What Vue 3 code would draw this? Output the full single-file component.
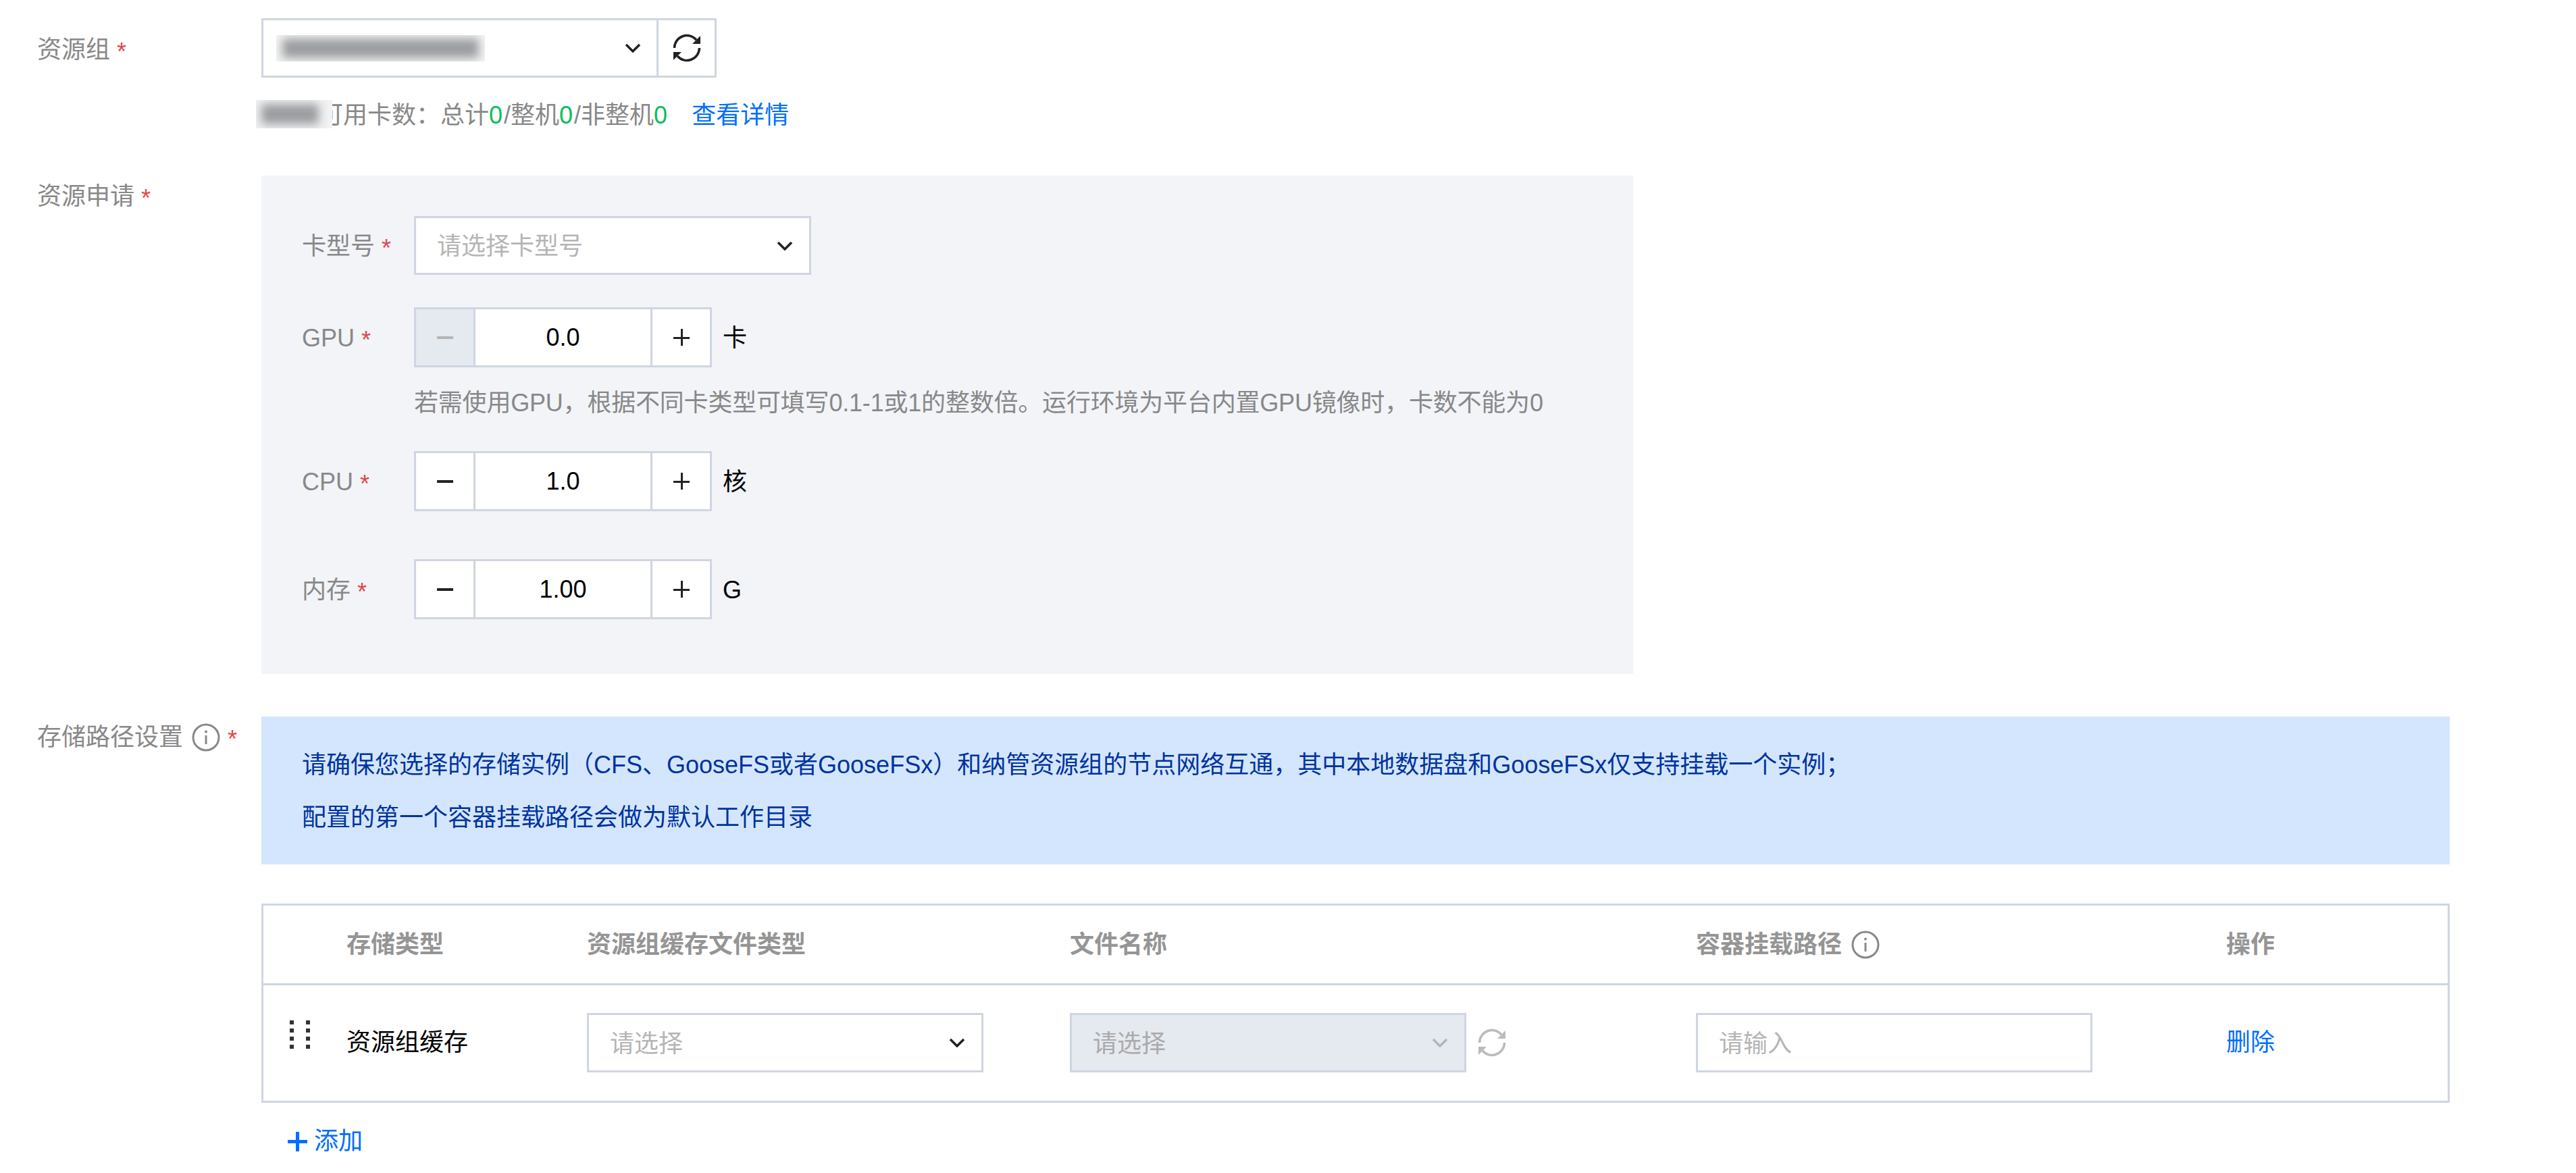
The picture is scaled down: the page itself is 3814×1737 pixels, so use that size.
<script setup>
const steppers = [
  { label: 'GPU', value: '0.0', unit: '卡', disabled: true, help: '若需使用GPU，根据不同卡类型可填写0.1-1或1的整数倍。运行环境为平台内置GPU镜像时，卡数不能为0' },
  { label: 'CPU', value: '1.0', unit: '核' },
  { label: '内存', value: '1.00', unit: 'G' }
]
</script>

<template>
  <main class="page">
    <section class="item first">
      <div class="label first-label">资源组<span class="star">*</span></div>
      <div>
        <div class="group">
          <div class="select group-select">
            <div class="blur-box name-blur"><i></i></div>
            <svg class="chev" viewBox="0 0 24 14"><path d="M2 2l10 10L22 2" /></svg>
          </div>
          <div class="refresh-btn">
            <svg class="refresh" viewBox="0 0 42 42"><path d="M2.500 21A18.500 18.500 0 0 1 35 9" /><path d="M39.500 21A18.500 18.500 0 0 1 7 33" /><path class="fill" d="M41 3V15H29Z" /><path class="fill" d="M1 39V27H13Z" /></svg>
          </div>
        </div>
        <div class="hint">
          <div class="blur-box hint-blur"><i></i></div>
          <span class="hint-text">可用卡数：总计<b>0</b>/整机<b>0</b>/非整机<b>0</b></span>
          <a class="link detail">查看详情</a>
        </div>
      </div>
    </section>

    <section class="item apply">
      <div class="label apply-label">资源申请<span class="star">*</span></div>
      <div class="panel">
        <div class="sub">
          <div class="sub-label">卡型号<span class="star">*</span></div>
          <div class="select card-select">
            <span class="ph">请选择卡型号</span>
            <svg class="chev" viewBox="0 0 24 14"><path d="M2 2l10 10L22 2" /></svg>
          </div>
        </div>
        <template v-for="s in steppers" :key="s.label">
          <div class="sub step-row">
            <div class="sub-label">{{ s.label }}<span class="star">*</span></div>
            <div class="stepper">
              <div class="step-btn minus" :class="{ off: s.disabled }"><i></i></div>
              <div class="step-val">{{ s.value }}</div>
              <div class="step-btn plus"><i></i><i class="v"></i></div>
            </div>
            <span class="unit">{{ s.unit }}</span>
          </div>
          <div v-if="s.help" class="help">{{ s.help }}</div>
          <div v-if="s.label === 'CPU'" class="row-gap"></div>
        </template>
      </div>
    </section>

    <section class="item storage">
      <div class="label storage-label">
        存储路径设置
        <svg class="info" viewBox="0 0 42 42"><circle cx="21" cy="21" r="19" /><path d="M21 18v13" /><circle class="dot" cx="21" cy="12.500" r="2" /></svg>
        <span class="star">*</span>
      </div>
      <div class="storage-body">
        <div class="alert">
          <p>请确保您选择的存储实例（CFS、GooseFS或者GooseFSx）和纳管资源组的节点网络互通，其中本地数据盘和GooseFSx仅支持挂载一个实例；</p>
          <p>配置的第一个容器挂载路径会做为默认工作目录</p>
        </div>
        <div class="table">
          <div class="tr head">
            <div></div>
            <div>存储类型</div>
            <div>资源组缓存文件类型</div>
            <div>文件名称</div>
            <div class="with-info">容器挂载路径
              <svg class="info small" viewBox="0 0 42 42"><circle cx="21" cy="21" r="19" /><path d="M21 18v13" /><circle class="dot" cx="21" cy="12.500" r="2" /></svg>
            </div>
            <div>操作</div>
          </div>
          <div class="tr body">
            <div class="drag"><i v-for="n in 8" :key="n"></i></div>
            <div class="type">资源组缓存</div>
            <div>
              <div class="select cell-select">
                <span class="ph">请选择</span>
                <svg class="chev" viewBox="0 0 24 14"><path d="M2 2l10 10L22 2" /></svg>
              </div>
            </div>
            <div class="file-cell">
              <div class="select cell-select disabled">
                <span class="ph dim">请选择</span>
                <svg class="chev" viewBox="0 0 24 14"><path d="M2 2l10 10L22 2" /></svg>
              </div>
              <svg class="refresh muted" viewBox="0 0 42 42"><path d="M2.500 21A18.500 18.500 0 0 1 35 9" /><path d="M39.500 21A18.500 18.500 0 0 1 7 33" /><path class="fill" d="M41 3V15H29Z" /><path class="fill" d="M1 39V27H13Z" /></svg>
            </div>
            <div>
              <div class="select cell-select"><span class="ph">请输入</span></div>
            </div>
            <div><a class="link">删除</a></div>
          </div>
        </div>
        <a class="add link"><span class="add-plus"><i></i><i class="v"></i></span>添加</a>
      </div>
    </section>
  </main>
</template>

<style scoped>
.page {
  box-sizing: border-box;
  min-height: 1737px;
  padding: 27px 0 0 55px;
  background: #fff;
  color: #000;
  font-family: "Liberation Sans", "Noto Sans CJK SC", sans-serif;
  font-size: 36px;
  line-height: 40px;
}
.item { display: grid; grid-template-columns: 332px 1fr; }
.apply { margin-top: 70px; }
.storage { margin-top: 63px; }
.label { display: flex; align-items: center; color: #888; height: 40px; }
.first-label { margin-top: 27px; }
.apply-label { margin-top: 11px; }
.storage-label { margin-top: 11px; }
.star { color: #e54545; margin-left: 10px; font-size: 36px; display: inline-block; transform: translateY(3px); }
.group { display: flex; width: 674px; height: 88px; }
.select {
  box-sizing: border-box;
  display: flex;
  align-items: center;
  justify-content: space-between;
  background: #fff;
  border: 3px solid #cfd5e2;
}
.group-select { width: 588px; padding-right: 23px; }
.refresh-btn {
  box-sizing: border-box;
  width: 86px;
  display: flex;
  align-items: center;
  justify-content: center;
  border: 3px solid #cfd5e2;
  border-left-width: 0;
}
.blur-box { background: #f2f2f2; overflow: hidden; position: relative; }
.blur-box i { position: absolute; background: #9b9ea1; filter: blur(7px); }
.name-blur { margin-left: 19px; width: 309px; height: 39px; background: #f4f4f4; }
.name-blur i { left: 9px; right: 9px; top: 5px; bottom: 5px; }
.chev { width: 24px; height: 14px; flex: none; }
.chev path { fill: none; stroke: #222; stroke-width: 3.500; }
.refresh { width: 42px; height: 42px; flex: none; }
.refresh path { fill: none; stroke: #222; stroke-width: 3.500; }
.refresh path.fill { fill: #222; stroke: none; }
.muted path { stroke: #bbb; }
.muted path.fill { fill: #bbb; }
.hint { display: flex; align-items: center; height: 42px; margin: 33px 0 0 -8px; color: #888; }
.hint-blur { width: 113px; height: 42px; flex: none; position: relative; z-index: 1; }
.hint-blur i { left: 8px; right: 20px; top: 6px; bottom: 6px; }
.hint-text { margin-left: -20px; padding-top: 3px; }
.hint-text b { color: #0abf5b; font-weight: 400; letter-spacing: 2px; }
.detail { margin-left: 34px; padding-top: 3px; }
.link { color: #006eff; }
.panel {
  box-sizing: border-box;
  width: 2031px;
  height: 738px;
  padding: 60px 0 0 60px;
  background: #f2f4f8;
}
.sub { display: flex; align-items: center; }
.sub-label { width: 166px; color: #888; flex: none; padding-top: 3px; }
.card-select { width: 588px; height: 87px; padding: 0 24px 0 31px; }
.ph { color: #b5b5b5; padding-top: 3px; }
.step-row { margin-top: 48px; }
.stepper { display: flex; height: 89px; background: #fff; border: 3px solid #cfd5e2; box-sizing: border-box; width: 441px; }
.step-btn { box-sizing: border-box; position: relative; width: 88px; flex: none; }
.step-btn i { position: absolute; top: 41px; width: 24px; height: 3px; background: #222; }
.step-btn i.v { top: 29px; width: 3px; height: 25px; }
.minus { border-right: 3px solid #cfd5e2; }
.minus i { left: 31px; height: 4px; top: 40px; }
.plus { border-left: 3px solid #cfd5e2; }
.plus i { left: 31px; }
.plus i.v { left: 42px; }
.off { background: #e5e9f0; }
.off i { background: #b5b5b5; }
.step-val { flex: 1; text-align: center; line-height: 83px; }
.unit { margin-left: 16px; padding-top: 2px; }
.help { margin: 32px 0 0 166px; color: #888; white-space: nowrap; letter-spacing: -0.2px; padding-top: 1px; height: 39px; }
.help + .step-row { margin-top: 52px; }
.row-gap { height: 23px; }
.info { width: 42px; height: 42px; margin-left: 13px; flex: none; }
.info circle { fill: none; stroke: #888; stroke-width: 3; }
.info path { stroke: #888; stroke-width: 3; }
.info circle.dot { fill: #888; stroke: none; }
.info + .star { margin-left: 11px; }
.small { margin-left: 14px; }
.storage-body { width: 3240px; }
.alert { box-sizing: border-box; height: 219px; padding: 33px 0 0 60px; background: #d4e6fe; color: #0033a0; }
.alert p { margin: 0; line-height: 78px; white-space: nowrap; }
.table { margin-top: 58px; border: 3px solid #cfd5e2; }
.tr { display: grid; grid-template-columns: 123px 356px 715px 927px 785px 1fr; }
.head { height: 118px; box-sizing: border-box; border-bottom: 3px solid #cfd5e2; align-items: center; color: #959595; font-weight: 700; }
.with-info { display: flex; align-items: center; }
.body { height: 171px; box-sizing: border-box; padding-top: 41px; align-items: start; }
.body > div { height: 88px; display: flex; align-items: center; }
.body > .drag {
  display: grid;
  grid-template-columns: 6px 6px;
  grid-auto-rows: 6px;
  column-gap: 18px;
  row-gap: 6px;
  align-items: stretch;
  height: auto;
  width: 30px;
  margin: 11px 0 0 39px;
}
.drag i { background: #333; }
.cell-select { width: 587px; height: 88px; padding: 0 24px 0 31px; }
.disabled { background: #e5e9f0; }
.disabled .chev path { stroke: #b5b5b5; }
.ph.dim { color: #aaa; }
.file-cell .refresh { margin-left: 17px; }
.add { display: flex; align-items: center; gap: 10px; margin: 37px 0 0 39px; }
.add-plus { position: relative; width: 29px; height: 29px; display: block; }
.add-plus i { position: absolute; left: 0; top: 12px; width: 29px; height: 5px; background: #006eff; }
.add-plus i.v { left: 12px; top: 0; width: 5px; height: 29px; }
</style>
